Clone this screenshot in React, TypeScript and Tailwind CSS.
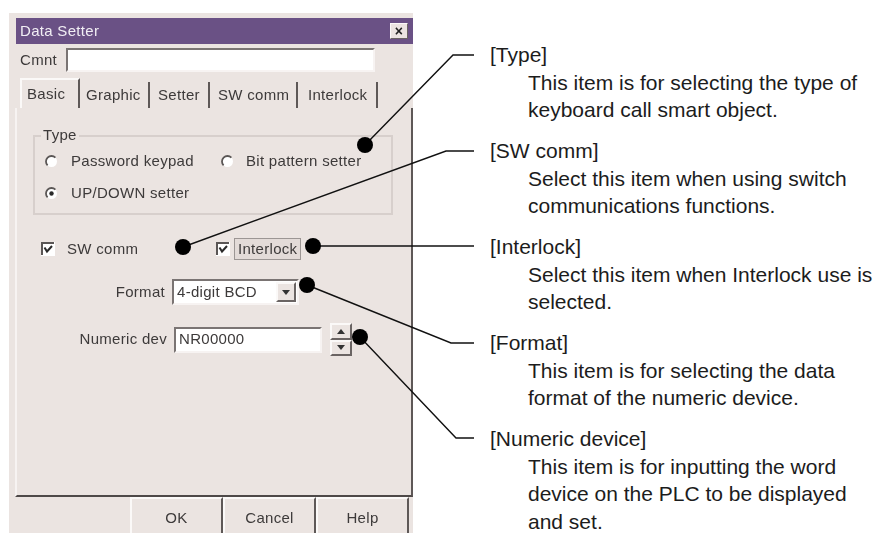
import React from 'react';

const sunken = 'border-2 border-t-[#7a7473] border-l-[#7a7473] border-r-[#f7f3f2] border-b-[#f7f3f2] bg-white';
const raised = 'border-2 border-t-[#fbf9f8] border-l-[#fbf9f8] border-r-[#6a6463] border-b-[#6a6463]';

function Radio({ checked }: { checked?: boolean }) {
  return (
    <svg width="13" height="13" viewBox="0 0 13 13" className="shrink-0">
      <circle cx="6.5" cy="6.5" r="5.5" fill="#ffffff" />
      <path d="M2.6 10.4 A5.5 5.5 0 0 1 10.4 2.6" fill="none" stroke="#5a5655" strokeWidth="1.8" />
      {checked && <circle cx="6.5" cy="6.5" r="2.2" fill="#2a2a2a" />}
    </svg>
  );
}

function Check() {
  return (
    <svg width="14" height="14" viewBox="0 0 14 14" className="shrink-0">
      <rect x="0" y="0" width="14" height="14" fill="#ffffff" />
      <path d="M1 13 V1 H13" stroke="#5a5655" fill="none" strokeWidth="2" />
      <path d="M3.5 5.5 L6 9.5 L11 4" stroke="#2a2a2a" strokeWidth="2" fill="none" />
    </svg>
  );
}

function Arrow({ up }: { up?: boolean }) {
  return (
    <svg width="8" height="5" viewBox="0 0 8 5">
      <path d={up ? 'M0 5 L4 0 L8 5 Z' : 'M0 0 L8 0 L4 5 Z'} fill="#333" />
    </svg>
  );
}

const tabs = [
  { name: 'Graphic', cls: 'w-[70px] pl-[6px]' },
  { name: 'Setter', cls: 'w-[60px] pl-[8px]' },
  { name: 'SW comm', cls: 'w-[88px] pl-[8px]' },
  { name: 'Interlock', cls: 'w-[80px] pl-[10px]' },
];

const notes = [
  { title: '[Type]', lines: ['This item is for selecting the type of', 'keyboard call smart object.'] },
  { title: '[SW comm]', lines: ['Select this item when using switch', 'communications functions.'] },
  { title: '[Interlock]', lines: ['Select this item when Interlock use is', 'selected.'] },
  { title: '[Format]', lines: ['This item is for selecting the data', 'format of the numeric device.'] },
  { title: '[Numeric device]', lines: ['This item is for inputting the word', 'device on the PLC to be displayed', 'and set.'] },
];

// leader lines: dot in the dialog -> corner -> short horizontal to the note
const leaders = [
  { dot: [365, 145], path: 'M365 145 L453 55 L474 55' },
  { dot: [183, 247], path: 'M183 247 L446 151 L474 151' },
  { dot: [313, 246], path: 'M313 246 L474 246' },
  { dot: [307, 285], path: 'M307 285 L451 343 L474 343' },
  { dot: [360, 337], path: 'M360 337 L456 438 L474 438' },
];

export default function App() {
  return (
    <div className="relative flex w-[881px] h-[533px] overflow-hidden bg-white">
      {/* dialog */}
      <div className="ml-[9px] mt-[13px] w-[404px] h-[540px] shrink-0 bg-[#ebe4e1] pl-[7px] pt-[5px] flex flex-col text-[15px] text-[#3d3a3a] tracking-[0.3px] blur-[0.4px]" style={{ fontFamily: '"Liberation Sans", Arial, sans-serif' }}>
        <div className="h-[26px] bg-[#6a5185] flex items-center justify-between pl-[4px] pr-[5px]">
          <span className="text-[#f1eef4] text-[15px]">Data Setter</span>
          <div className="w-[18px] h-[16px] bg-[#ebe4e1] flex items-center justify-center text-[14px] font-bold leading-none text-[#222] border border-t-[#fbf9f8] border-l-[#fbf9f8] border-r-[#6a6463] border-b-[#6a6463]">×</div>
        </div>

        <div className="mt-[4px] h-[24px] flex items-center pl-[4px]">
          <span className="w-[46px]">Cmnt</span>
          <div className={`w-[309px] h-[24px] ${sunken}`} />
        </div>

        <div className="mt-[6px] h-[30px] flex items-end pl-[4px]">
          <div className="w-[60px] h-[30px] pl-[5px] flex items-center border-t-2 border-l-2 border-r-2 border-t-[#fbf9f8] border-l-[#fbf9f8] border-r-[#5e5857]">Basic</div>
          {tabs.map((t) => (
            <div key={t.name} className={`${t.cls} h-[26px] flex items-center border-r-2 border-r-[#5e5857]`}>{t.name}</div>
          ))}
        </div>

        {/* tab page */}
        <div className="-ml-[1px] h-[389px] border-l-2 border-l-[#f7f3f2] border-r-2 border-r-[#5e5857] border-b-2 border-b-[#4e4948] flex flex-col">
          <div className="relative ml-[16px] mt-[27px] w-[360px] h-[80px] border-2 border-[#d7cfcc] flex flex-col pl-[10px]">
            <span className="absolute -top-[11px] left-[6px] bg-[#ebe4e1] px-[2px] leading-[18px]">Type</span>
            <div className="mt-[13px] flex items-center h-[22px]">
              <Radio />
              <span className="ml-[13px] w-[150px]">Password keypad</span>
              <Radio />
              <span className="ml-[12px]">Bit pattern setter</span>
            </div>
            <div className="mt-[10px] flex items-center h-[22px]">
              <Radio checked />
              <span className="ml-[13px]">UP/DOWN setter</span>
            </div>
          </div>

          <div className="mt-[22px] ml-[24px] h-[24px] flex items-center">
            <Check />
            <span className="ml-[12px] w-[149px]">SW comm</span>
            <Check />
            <span className="ml-[4px] px-[3px] border border-[#9c9694] bg-[#e3dbd8] leading-[20px]">Interlock</span>
          </div>

          <div className="mt-[18px] flex items-center h-[26px]">
            <span className="w-[149px] text-right pr-[1px]">Format</span>
            <div className={`ml-[6px] w-[127px] h-[26px] ${sunken} flex items-center pl-[3px] pr-[1px]`}>
              <span className="flex-1">4-digit BCD</span>
              <div className={`w-[20px] h-[20px] bg-[#ebe4e1] ${raised} flex items-center justify-center`}>
                <Arrow />
              </div>
            </div>
          </div>

          <div className="mt-[18px] flex items-center h-[33px]">
            <span className="w-[150px] text-right">Numeric dev</span>
            <div className={`ml-[7px] w-[148px] h-[26px] ${sunken} flex items-center pl-[3px]`}>NR00000</div>
            <div className="ml-[8px] w-[22px] h-[33px] flex flex-col">
              <div className={`flex-1 bg-[#ebe4e1] ${raised} flex items-center justify-center`}><Arrow up /></div>
              <div className={`flex-1 bg-[#ebe4e1] ${raised} flex items-center justify-center`}><Arrow /></div>
            </div>
          </div>
        </div>

        {/* buttons */}
        <div className="flex h-[40px] pl-[114px]">
          {['OK', 'Cancel', 'Help'].map((b) => (
            <div key={b} className="w-[93px] h-full flex items-start pt-[8px] justify-center border-t-2 border-t-[#fbf9f8] border-l-2 border-l-[#fbf9f8] border-r-2 border-r-[#5e5857]">
              {b}
            </div>
          ))}
        </div>
      </div>

      {/* notes */}
      <div className="ml-[77px] pt-[41px] flex flex-col text-[21px] leading-[27.5px] text-[#1c1c1c]" style={{ fontFamily: '"Liberation Sans", Arial, sans-serif' }}>
        {notes.map((n) => (
          <div key={n.title} className="mb-[13.5px]">
            <div>{n.title}</div>
            <div className="pl-[38px]">
              {n.lines.map((l) => (
                <div key={l} className="whitespace-nowrap">{l}</div>
              ))}
            </div>
          </div>
        ))}
      </div>

      <svg className="absolute inset-0 pointer-events-none" width="881" height="533" viewBox="0 0 881 533">
        {leaders.map((l, i) => (
          <g key={i}>
            <path d={l.path} stroke="#111" strokeWidth="1.4" fill="none" />
            <circle cx={l.dot[0]} cy={l.dot[1]} r="8" fill="#000" />
          </g>
        ))}
      </svg>
    </div>
  );
}
